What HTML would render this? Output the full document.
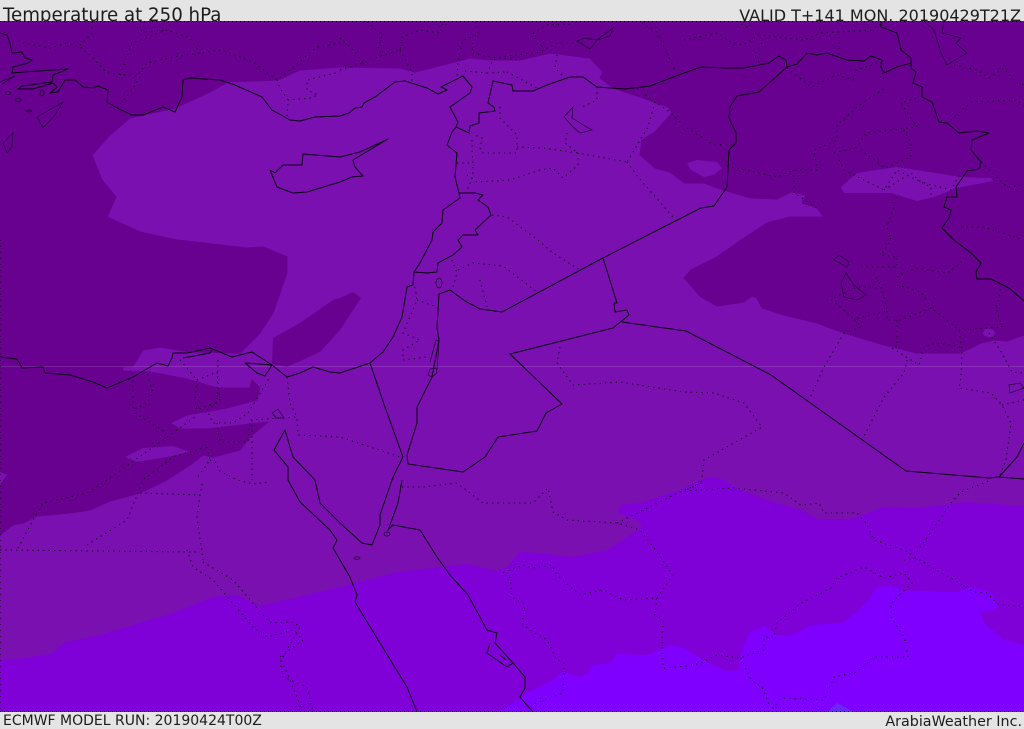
<!DOCTYPE html>
<html><head><meta charset="utf-8"><title>Temperature at 250 hPa</title>
<style>
html,body{margin:0;padding:0;background:#e4e4e4;width:1024px;height:729px;overflow:hidden}
svg{display:block;position:absolute;left:0;top:0}
text{font-family:"DejaVu Sans","Liberation Sans",sans-serif;fill:#1c1c1c}
.c{fill:none;stroke:#0a0014;stroke-width:1;stroke-linejoin:round}
.t{fill:none;stroke:#1a0030;stroke-width:.7}
.d{fill:none;stroke:#0a0014;stroke-width:1.1;stroke-dasharray:1.2 4.2}
</style></head><body>
<svg width="1024" height="729" viewBox="0 0 1024 729" xmlns="http://www.w3.org/2000/svg">
<defs><clipPath id="m"><rect x="0" y="21" width="1024" height="691"/></clipPath></defs>
<rect width="1024" height="729" fill="#e4e4e4"/>
<text x="3" y="21" font-size="18.2">Temperature at 250 hPa</text>
<text x="1021" y="21" font-size="16" text-anchor="end">VALID T+141 MON. 20190429T21Z</text>
<text x="3" y="725" font-size="14">ECMWF MODEL RUN: 20190424T00Z</text>
<text x="1022" y="726" font-size="14.3" text-anchor="end">ArabiaWeather Inc.</text>
<g clip-path="url(#m)">
<rect x="0" y="21" width="1024" height="691" fill="#7a10b0"/>
<!-- dark field -->
<path fill="#680090" stroke="#680090" stroke-width="1" stroke-linejoin="round" d="M0 21L1024 21L1024 335L1007 341L994 340L981 343L961 353L917 353L884 345L844 333L817 323L784 315L762 308L757 298L752 296L744 302L717 306L701 297L684 278L691 270L717 257L741 240L767 223L790 217L824 217L817 208L802 203L806 195L791 192L777 199L751 198L717 188L704 183L684 183L670 172L655 168L640 155L642 140L655 132L672 113L668 107L640 97L613 88L600 78L603 72L590 58L550 53L520 60L490 60L470 58L415 72L400 68L340 67L300 70L278 80L228 82L210 92L175 108L130 118L110 135L92 155L102 180L116 197L107 217L140 232L177 240L247 248L263 247L287 257L287 273L273 313L260 333L240 353L190 352L160 347L143 350L133 366L122 367L123 371L150 372L187 379L217 388L250 388L252 380L260 388L257 400L227 408L187 415L170 423L180 429L207 429L268 422L250 437L240 450L213 457L203 455L193 463L167 480L140 493L110 501L90 510L70 513L37 516L23 523L13 525L0 535Z"/>
<path fill="#680090" d="M273 338L300 323L333 300L340 298L353 292L361 298L340 330L320 352L287 367L272 364Z"/>
<!-- mid holes -->
<path fill="#7a10b0" d="M125 457L143 448L173 446L190 452L167 457L137 462ZM0 472L7 475L0 485ZM841 187L857 173L897 167L961 177L991 178L993 181L957 188L934 197L917 201L891 193L844 193ZM687 163L697 160L717 162L722 168L714 175L704 177L691 170Z"/>
<ellipse cx="989" cy="333" rx="6" ry="4" fill="#7a10b0"/>
<!-- third band -->
<path fill="#8000d8" d="M0 660L27 658L53 653L63 643L100 635L173 613L213 597L237 595L260 606L340 587L397 572L440 567L467 564L497 571L507 567L520 552L540 553L573 557L607 550L627 537L642 527L637 520L618 513L620 505L640 503L680 490L701 480L712 477L724 480L741 490L767 500L801 510L817 519L851 519L884 507L917 508L967 502L1024 506L1024 712L0 712Z"/>
<!-- bright -->
<path fill="#8000ff" d="M500 712L527 693L553 680L563 672L580 677L588 673L593 665L610 663L617 654L647 655L670 645L684 648L707 662L727 671L739 670L740 655L749 633L764 626L776 635L791 636L811 625L841 623L857 612L871 597L876 587L891 586L907 591L957 592L971 587L991 592L999 605L994 610L981 612L984 623L1004 640L1024 645L1024 712Z"/>
<path fill="#6a28f4" d="M827 712L837 703L854 712Z"/>
<line x1="0" y1="366.5" x2="1024" y2="366.5" stroke="#fff" stroke-opacity=".13"/>
<!-- dotted borders -->
<path class="d" d="M23 43L50 48L67 43L80 47L92 57L107 73L137 76L147 63L173 57L200 53L222 50L253 62L277 80L287 72L317 47L340 43M80 45L92 33L92 22M120 75L132 43L167 30L190 38L200 53M137 27L143 32L167 30M117 108L132 90L140 77M277 80L280 88L288 100L287 117M288 100L310 98L318 95L307 90L307 80L340 72M340 70L363 63L383 55L400 50L402 37L420 30L440 33L443 21M400 50L412 72L412 83M340 38L353 50L363 63M367 22L382 35L378 50L383 55M477 21L478 35L463 40L458 60L457 77M465 71L487 73L493 60L507 56L540 52L557 43L575 43M473 43L472 53L490 57L520 60M533 33L547 25L572 24M533 33L537 43L543 47M557 55L555 68L565 78M507 72L537 88M487 73L507 72M667 53L675 70M642 23L657 32L667 53M637 88L655 102L670 112L680 122M655 102L648 127L627 162"/>
<path class="d" d="M500 107L500 118L517 135L517 153L483 153L480 148L482 138L475 135M472 140L473 177L467 190M457 163L473 163M467 175L477 182L510 180L540 170L553 168L563 178L578 165L578 153L627 162M517 147L543 148L578 153M597 87L597 100L580 108M567 133L565 143L578 153M627 162L638 177L673 217M492 215L507 217L538 240L553 253L580 270M452 260L457 273L453 287M458 270L473 263L503 266L537 292M480 280L487 307M415 287L417 300L403 333L420 340L403 350L403 360L427 357M417 300L437 307M560 347L557 363L573 385L620 382L684 392L714 393L744 403L762 427L704 460L702 478L701 483L684 491L734 488L784 493L801 505L819 503L824 513L857 513L866 523L874 540L904 550L931 567L951 578L974 592L987 593L999 605L1024 606"/>
<path class="d" d="M402 487L423 487L457 483L483 503L533 503L548 488L553 512L567 520L617 523L640 530L657 552L673 575L657 598L623 600L603 590L580 595L557 575L552 565L533 568L523 565L500 574M510 577L512 597L525 605L522 623L530 630L547 640L557 660L564 663L563 693L533 704M617 523L680 492L701 483M657 598L655 615L663 620L662 643L663 668L687 666L701 663L717 655L739 658L764 650L764 637L774 637L777 623L801 603L831 588L837 578L864 567L884 578L904 573L912 583L891 603L891 617L904 637L908 657L874 657L857 672L834 677L824 700L781 698L772 710M741 658L751 680L762 687L769 704M904 560L917 558L931 567M917 552L951 503L961 492L991 480"/>
<path class="d" d="M0 550L200 552M18 548L37 513L43 503L87 493L107 480L195 417M87 545L127 520L143 480L173 457L207 447M140 493L200 495L203 480M200 495L197 517L202 552L203 560M187 550L193 567L213 580L253 627L267 637L293 630L303 640L280 657L290 680L302 710M203 562L233 580L270 623L293 622L300 627L280 662L283 677L307 687L313 712M133 380L133 410L147 403L153 393L147 373M135 413L167 433M180 360L197 380L195 400L197 410L217 402L218 357M197 380L217 372L220 400L207 410L213 423L233 423L248 413L270 377M217 423L220 442L248 442L250 420L297 417L298 435L340 437L400 457M252 420L252 480M287 377L290 403L297 417M207 447L210 460L197 478M210 460L217 463L218 470L237 480L253 484L270 482"/>
<path class="d" d="M684 40L717 33L731 42L743 45L759 35L804 40L821 33L871 30L881 24M737 21L759 35M762 43L754 55L759 62M819 23L821 33M839 37L839 55M687 128L714 145L734 145M727 166L777 177L794 170L817 170L814 150L837 140L837 125L857 107L886 87M787 68L811 87L837 75L854 80L856 70L881 62L884 82M794 170L794 193L817 208M834 153L857 147L866 133L917 127L901 103L917 98M904 130L911 143L911 157L885 168L857 147M839 160L844 170L884 190L897 170L931 187L931 197M897 197L887 227L891 240M884 190L911 173L921 182L951 190L961 172M951 120L971 102L1017 100L1024 107M961 227L984 227L1024 240M981 162L1007 187L1024 185M954 65L977 70L989 78L1004 68L1017 83L1024 85"/>
<path class="d" d="M844 333L861 327L854 319L887 311L882 288L857 287L831 299L854 319M844 333L824 367L809 400M861 267L897 267L897 257L881 255L891 240M874 273L882 288M887 311L887 320L901 320L931 308L947 320L959 330L962 350L961 377L959 388L991 393L1002 405L1011 423L1006 460L999 477M897 277L914 268L947 273L971 255M897 285L921 292L931 308M897 320L897 347L892 348L919 365L924 347L937 343L962 347M907 360L904 373L884 397L862 440M959 330L1002 327L996 308L1001 288M989 333L1002 353L1012 372L1024 373M1002 405L1024 400"/>
<path d="M0.5 240V712" stroke="#0a0014" stroke-opacity=".6" stroke-dasharray="1 5" fill="none"/>
<!-- solid borders & coasts -->
<path class="c" d="M0 33L7 35L10 43L12 53L22 52L25 58L32 60L28 63L13 67L12 73L23 72L68 69L53 75L52 82L22 86L18 89L33 89L53 83L57 87L50 93L58 92L65 80L75 80L83 87L93 88L98 86L108 90L107 102L117 108L132 115L143 115L163 107L175 112L182 97L183 80L190 78L220 80L235 85L262 97L272 110L290 120L300 121L315 117L340 116L349 113L355 108L362 107L364 103L375 97L395 82L405 81L427 88L438 94L447 90L441 87L463 76L472 87L470 93L450 107L458 122L456 127L469 133L470 126L479 123L479 113L495 111L494 107L488 103L493 81L512 85L513 91L533 91L547 85L570 77L583 77L597 87L625 89L650 86L684 73L701 67L727 68L744 68L769 63L779 56L786 60L787 67L797 64L807 53L817 55L827 53L847 60L864 61L871 56L882 60L881 67L884 73L897 67L911 63"/>
<path class="c" d="M881 21L881 27L897 33L901 50L911 58L911 68L916 72L913 83L922 87L922 97L932 102L939 122L947 123L959 133L977 131L989 133L972 140L971 150L981 162L979 169L967 171L956 187L957 197L947 197L944 207L951 210L949 218L942 228L954 240L971 253L981 263L976 272L977 279L991 279L1009 288L1024 301"/>
<path class="c" d="M787 67L759 92L737 96L730 107L729 118L736 133L736 143L729 150L727 187L714 206L701 208L638 240L603 258L502 312L480 309L465 301L450 290L439 294L437 327L439 340L432 377L417 407L417 423L407 455L408 464L463 472L485 457L498 437L537 431L546 413L562 404L510 354L613 328L629 315L627 310L615 312L614 303L617 303L603 258M622 322L686 331L771 375L906 471L989 478L999 477L1024 479M999 477L1017 457L1024 443"/>
<path class="c" d="M456 127L452 132L447 145L457 153L455 177L459 193L475 193L483 195L478 200L488 207L491 215L475 230L478 235L463 235L458 240L462 247L453 255L438 263L437 272L427 273L414 272M459 193L460 198L443 210L442 223L433 232L432 240L420 263L414 272L413 285L407 287L402 317L393 337L383 352L370 363L340 373L330 372L313 367L300 373L287 377L272 365L252 352L232 357L210 348L187 353L173 353L172 358L168 366L157 363L133 377L107 388L93 382L70 375L45 373L43 367L22 368L17 359L0 357M272 365L245 363L257 373L265 376L272 365M183 358L210 353L212 350M370 363L385 407L403 457L395 473L392 480L380 515L380 525L372 545L362 543L340 523L320 503L315 480L293 457L285 430L274 450L288 467L288 480L300 502L330 530L337 540L333 548L340 560L350 577L357 595L355 602L380 643L407 687L417 712"/>
<path class="c" d="M402 480L398 503L390 525L388 530L393 525L420 530L437 557L450 575L468 595L487 630L497 633L495 643L513 663L525 677L525 688L520 697L533 712M490 643L487 653L507 667L513 663M500 655L506 660M270 170L277 187L293 193L307 192L340 182L352 177L363 176L355 167L353 160L388 139L360 152L340 157L303 154L302 165L283 165L275 173Z"/>
<path class="t" d="M430 362L436 340L439 341L437 370M432 377L437 373L436 368L430 369L428 375ZM924 21L934 30L941 53L947 65L967 53L956 43L961 38L942 33L944 21M573 107L564 117L573 127L580 133L592 130L585 126L572 118ZM577 41L585 38L597 40L613 28L610 36L597 40L590 49ZM846 273L841 283L844 297L857 300L866 295L854 285ZM834 260L839 255L849 262L847 267ZM37 117L63 102L55 115L43 128ZM3 143L13 133L12 147L7 153ZM0 82L15 76L2 84M1009 385L1020 383L1024 388L1010 393ZM436 283a3 5 0 1 0 6 0a3 5 0 1 0-6 0M272 413L278 409L284 418L276 418Z"/>
<ellipse cx="8" cy="93" rx="2.5" ry="1.5" class="t"/><ellipse cx="18" cy="100" rx="3" ry="1.5" class="t"/><ellipse cx="29" cy="111" rx="2.5" ry="1" class="t"/><ellipse cx="42" cy="93" rx="2" ry="3" class="t"/><ellipse cx="387" cy="534" rx="3" ry="2" class="t"/><ellipse cx="357" cy="558" rx="3" ry="1.2" class="t"/>
<path d="M0 21.5H1024M0 711.5H1024" stroke="#000" stroke-width="1" stroke-dasharray="1 3" fill="none"/>
</g>
</svg>
</body></html>
